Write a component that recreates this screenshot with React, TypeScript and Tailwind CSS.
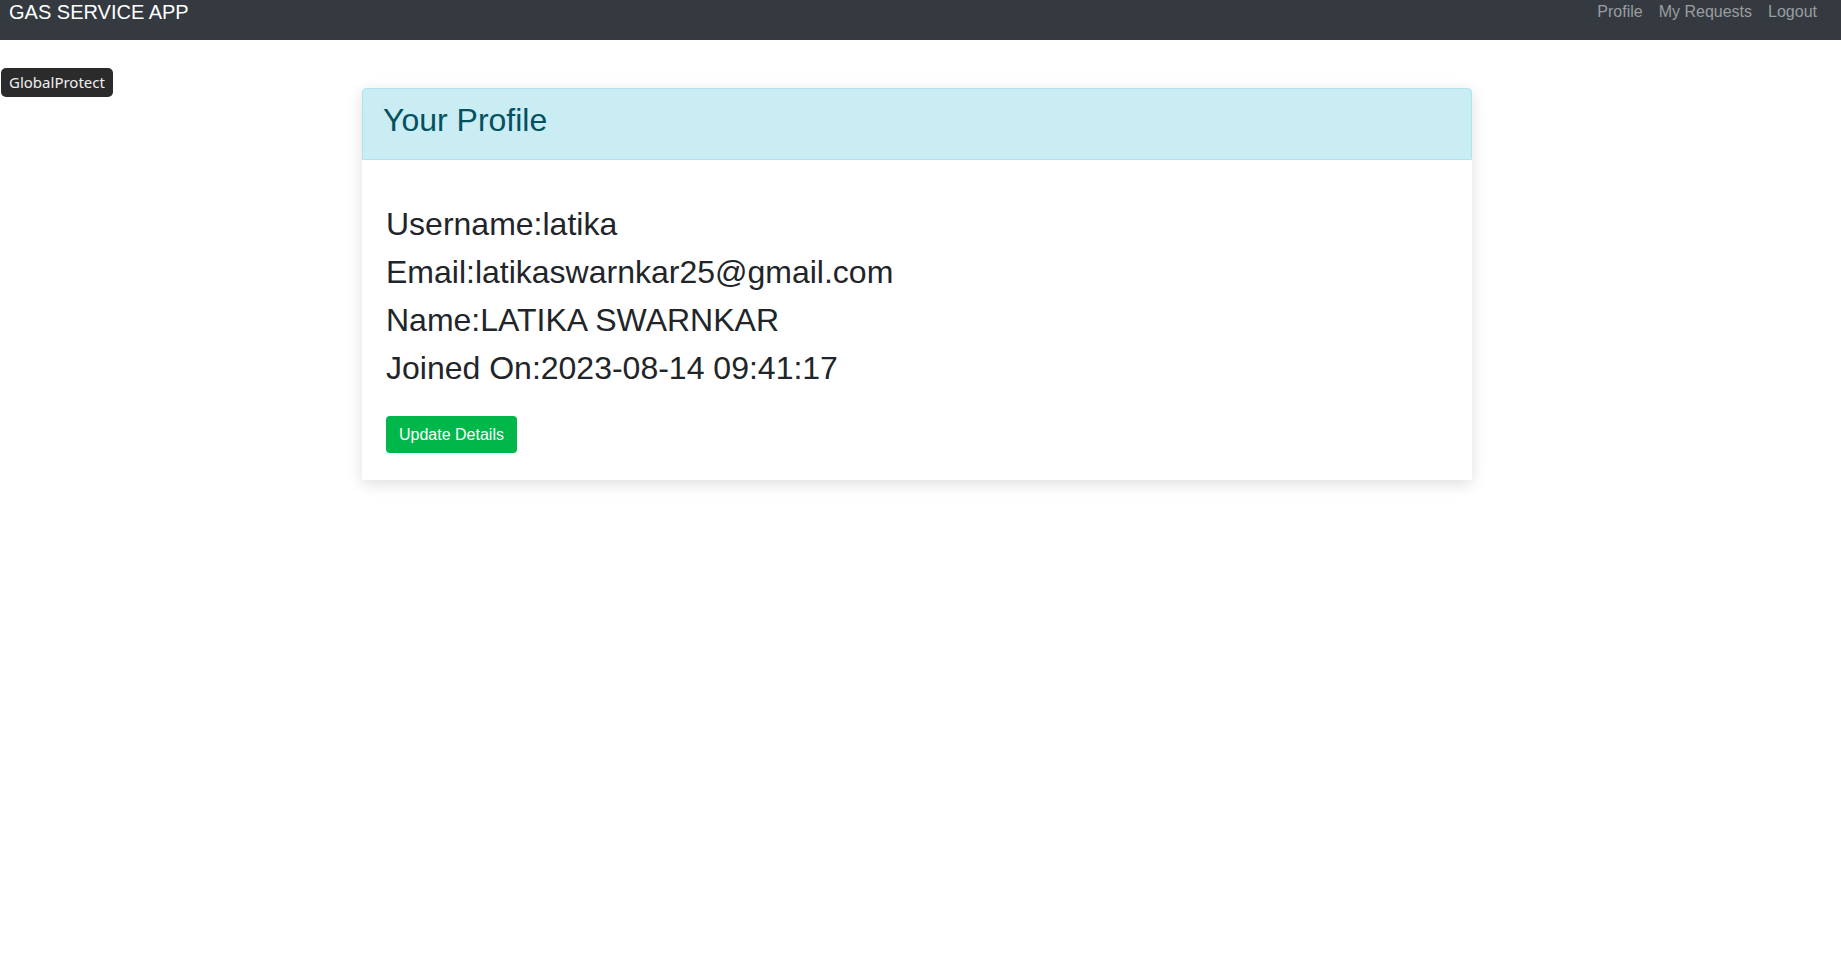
const profile = [
  { label: "Username", value: "latika" },
  { label: "Email", value: "latikaswarnkar25@gmail.com" },
  { label: "Name", value: "LATIKA SWARNKAR" },
  { label: "Joined On", value: "2023-08-14 09:41:17" },
]

function App() {
  return (
    <div className="min-h-screen bg-white font-['Liberation_Sans',Arial,sans-serif] relative">
      {/* Navbar */}
      <nav className="flex items-start justify-between h-10 bg-[#343a40] pl-[9px] pr-6">
        <span className="text-white text-[20px] leading-[24px]">GAS SERVICE APP</span>
        <ul className="flex gap-[16px] text-[16px] leading-[24px] text-[#9a9da0]">
          <li>Profile</li>
          <li>My Requests</li>
          <li>Logout</li>
        </ul>
      </nav>

      {/* overlay badge */}
      <div className="absolute left-[1px] top-[68px] h-[29px] px-2 flex items-center rounded-[5px] bg-[#2b2b2b] text-[#f0f0f0] text-[15px] font-['Noto_Sans',sans-serif]">
        GlobalProtect
      </div>

      {/* Card */}
      <div className="pr-[7px]">
        <div className="w-[1110px] mx-auto mt-12 bg-white shadow-[0_4px_14px_rgba(0,0,0,0.13)]">
          <div className="h-[72px] px-5 pt-3 bg-[#c9edf3] border border-[#aee3ec] rounded-t-[4px]">
            <h2 className="text-[32px] leading-[38px] text-[#055160]">Your Profile</h2>
          </div>

          <div className="pt-[40px] px-6 pb-[27px] text-[#212529]">
            {profile.map((item) => (
              <p key={item.label} className="text-[32px] leading-[48px]">
                {item.label}:{item.value}
              </p>
            ))}
            <button className="mt-[24px] h-[37px] px-[13px] rounded-[4px] bg-[#00b74a] text-white text-[16px]">
              Update Details
            </button>
          </div>
        </div>
      </div>
    </div>
  )
}

export default App
